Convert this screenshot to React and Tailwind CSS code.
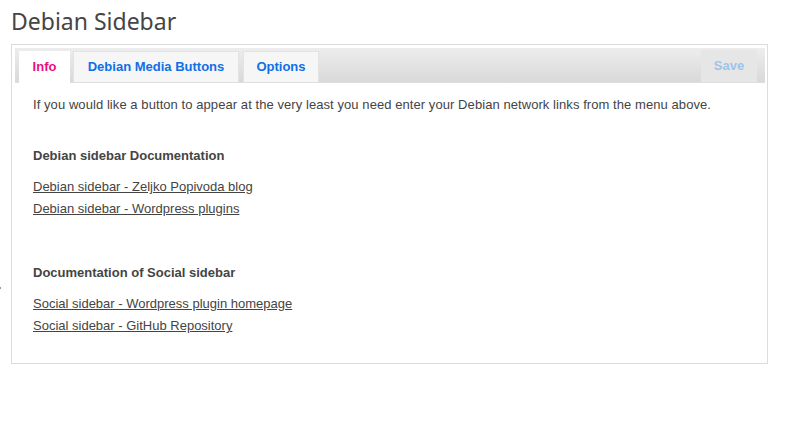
export default function App() {
  const sans = { fontFamily: '"Liberation Sans", Arial, sans-serif' };
  return (
    <div className="bg-white w-[802px] h-[429px] relative" style={sans}>
      <div className="absolute left-0 top-[287px] w-[1px] h-[2px] bg-[#999]"></div>
      <h1
        className="pl-[11px] pt-[6px] h-[44px] text-[23px] leading-[30px] text-[#454545]"
        style={{ fontFamily: '"Noto Sans", "Open Sans", sans-serif' }}
      >
        Debian Sidebar
      </h1>
      <div className="ml-[11px] w-[757px] h-[320px] border border-[#dcdcdc] pt-[3px] pl-[3px] pr-[2px]">
        <div className="h-[35px] flex items-end pl-[4px] pr-[8px] bg-gradient-to-b from-[#ededed] to-[#d9d9d9] border-b border-[#dedede]">
          <div className="w-[51px] h-[32px] bg-white flex items-center justify-center text-[13px] font-bold text-[#ec0f7e] -mb-px">
            Info
          </div>
          <div className="ml-[3px] w-[166px] h-[31px] bg-[#f6f6f6] border border-[#e3e3e3] border-b-0 flex items-center justify-center text-[13px] font-bold text-[#0f6fe6]">
            Debian Media Buttons
          </div>
          <div className="ml-[4px] w-[76px] h-[31px] bg-[#f6f6f6] border border-[#e3e3e3] border-b-0 flex items-center justify-center text-[13px] font-bold text-[#0f6fe6]">
            Options
          </div>
          <div className="ml-auto w-[56px] h-[32px] bg-[#e6e6e6] flex items-center justify-center text-[13px] font-bold text-[#9ec3ea]">
            Save
          </div>
        </div>
        <div className="pl-[18px] pt-[12px] text-[13px] leading-[20px] text-[#444]">
          <p className="tracking-[0.07px]">If you would like a button to appear at the very least you need enter your Debian network links from the menu above.</p>
          <h3 className="mt-[31px] font-bold">Debian sidebar Documentation</h3>
          <div className="mt-[11px] flex flex-col gap-[2px]">
            <a className="underline self-start">Debian sidebar - Zeljko Popivoda blog</a>
            <a className="underline self-start">Debian sidebar - Wordpress plugins</a>
          </div>
          <h3 className="mt-[44px] font-bold">Documentation of Social sidebar</h3>
          <div className="mt-[11px] flex flex-col gap-[2px]">
            <a className="underline self-start">Social sidebar - Wordpress plugin homepage</a>
            <a className="underline self-start">Social sidebar - GitHub Repository</a>
          </div>
        </div>
      </div>
    </div>
  );
}
